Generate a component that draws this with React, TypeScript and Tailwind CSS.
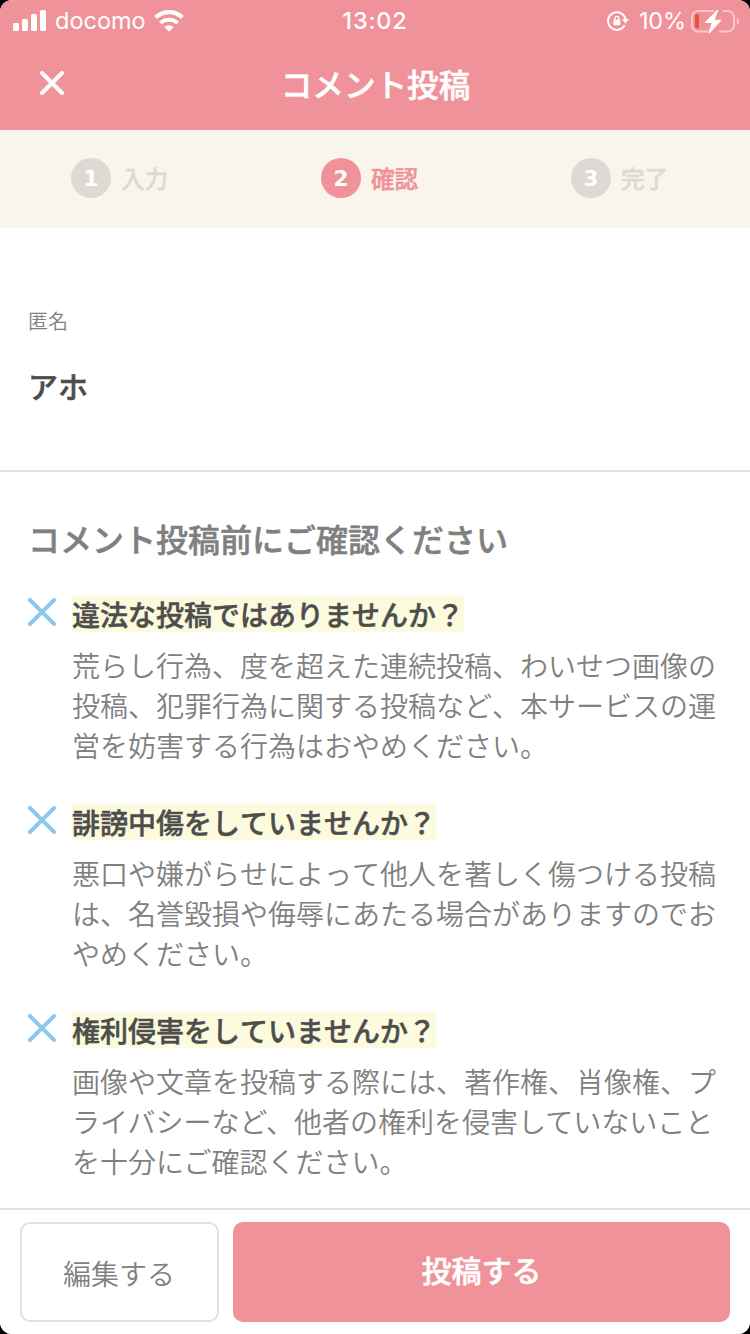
import React from "react";

const jp = "font-['Noto_Sans_CJK_JP',sans-serif] [font-kerning:none]";
const heavy = "font-medium [-webkit-text-stroke:0.5px_currentColor]";

const checks = [
  {
    title: "違法な投稿ではありませんか？",
    kerned: false,
    lines: [
      "荒らし行為、度を超えた連続投稿、わいせつ画像の",
      "投稿、犯罪行為に関する投稿など、本サービスの運",
      "営を妨害する行為はおやめください。",
    ],
  },
  {
    title: "誹謗中傷をしていませんか？",
    kerned: false,
    lines: [
      "悪口や嫌がらせによって他人を著しく傷つける投稿",
      "は、名誉毀損や侮辱にあたる場合がありますのでお",
      "やめください。",
    ],
  },
  {
    title: "権利侵害をしていませんか？",
    kerned: true,
    lines: [
      "画像や文章を投稿する際には、著作権、肖像権、プ",
      "ライバシーなど、他者の権利を侵害していないこと",
      "を十分にご確認ください。",
    ],
  },
];

const steps = [
  { n: "1", label: "入力", active: false },
  { n: "2", label: "確認", active: true },
  { n: "3", label: "完了", active: false },
];

function StatusBar() {
  return (
    <div className="grid h-10 grid-cols-3 font-[Inter,sans-serif] text-white">
      <div className="flex items-center pl-[13px]">
        <svg width="34" height="22" viewBox="0 0 34 22" fill="currentColor" className="-mt-[1px]">
          <rect x="0" y="13" width="6" height="8" rx="1.5" />
          <rect x="9" y="9" width="6" height="12" rx="1.5" />
          <rect x="18" y="4" width="6" height="17" rx="1.5" />
          <rect x="27" y="0" width="6" height="21" rx="1.5" />
        </svg>
        <span className="ml-[8px] w-[91px] text-[23.5px] leading-10">docomo</span>
        <svg width="30" height="22" viewBox="0 0 30 22" fill="none" stroke="currentColor" className="-mt-[1px] ml-[8px]">
          <path d="M1.6 7.6a19 19 0 0 1 26.8 0" strokeWidth="4.2" />
          <path d="M6.4 13.2a12.2 12.2 0 0 1 17.2 0" strokeWidth="3.8" />
          <path d="M15 21.8l-4.7-4.7a6.8 6.8 0 0 1 9.4 0z" fill="currentColor" stroke="none" />
        </svg>
      </div>
      <div className="text-center text-[23.5px] leading-[42px] font-medium tracking-[0.8px]">13:02</div>
      <div className="flex items-center justify-end pr-[10px]">
        <svg width="22" height="22" viewBox="0 0 22 22" fill="none" stroke="currentColor" className="-mt-[1px]">
          <path d="M17.6 15.3A8.8 8.8 0 1 1 18.6 10" strokeWidth="2" />
          <path d="M15 9h7l-3.5 4.6z" fill="currentColor" stroke="none" />
          <rect x="6.5" y="9.6" width="6.8" height="5.6" rx="0.8" fill="currentColor" stroke="none" />
          <path d="M8 10.2V8.2a1.9 1.9 0 0 1 3.8 0v2" strokeWidth="1.3" />
        </svg>
        <span className="ml-[10px] w-[47px] text-[23.5px] leading-10 tracking-[-0.2px]">10%</span>
        <svg width="50" height="26" viewBox="0 0 50 26" fill="none" className="-mt-[1px] ml-[4px] shrink-0">
          <path
            d="M24 3H8a6 6 0 0 0-6 6v8.4a6 6 0 0 0 6 6h10M29 23.4h9a6 6 0 0 0 6-6V9a6 6 0 0 0-6-6h-5"
            stroke="#f8c8cc"
            strokeWidth="2"
          />
          <path d="M46.8 9.6v7.4a4 4 0 0 0 0-7.4z" fill="#f8c8cc" />
          <rect x="5" y="6" width="4" height="14.5" rx="1.8" fill="#e8503f" />
          <path
            d="M27.6 2.2L15.6 14.4h6.8l-3.2 10.4L30.6 12.4h-6.8z"
            fill="#fff"
            stroke="#fff"
            strokeWidth="1.2"
            strokeLinejoin="round"
          />
        </svg>
      </div>
    </div>
  );
}

function Cross({ className, size, stroke }: { className: string; size: number; stroke: number }) {
  const a = stroke / 2;
  const b = size - a;
  return (
    <svg width={size} height={size} className={className} fill="none" stroke="currentColor" strokeWidth={stroke} strokeLinecap="round">
      <path d={`M${a} ${a}L${b} ${b}M${b} ${a}L${a} ${b}`} />
    </svg>
  );
}

export default function App() {
  return (
    <div className="bg-black">
      <div className={`flex h-[1334px] w-[750px] flex-col overflow-hidden rounded-[12px] bg-white text-[#808080] ${jp}`}>
        <header className="h-[130px] shrink-0 bg-[#f0929a] text-white">
          <StatusBar />
          <div className="grid h-[90px] grid-cols-[150px_1fr_150px]">
            <button className="flex items-start pt-[31px] pl-[40px]" aria-label="閉じる">
              <Cross className="text-white" size={24} stroke={4} />
            </button>
            <h1 className={`pl-[1px] text-center text-[31.6px] leading-[86px] ${heavy}`}>コメント投稿</h1>
          </div>
        </header>

        <nav className="grid h-[98px] shrink-0 grid-cols-3 bg-[#faf5ec] pt-7">
          {steps.map((s) => (
            <div key={s.n} className={`flex h-10 items-center gap-[10px] pl-[71px] ${s.active ? "text-[#f0929a]" : "text-[#dddad4]"}`}>
              <span
                className={`flex size-10 items-center justify-center rounded-full pt-[2px] font-['DejaVu_Sans',sans-serif] text-[21.5px] font-bold text-white ${
                  s.active ? "bg-[#f0929a]" : "bg-[#dddad4]"
                }`}
              >
                {s.n}
              </span>
              <span className={`text-[23.6px] leading-10 ${heavy}`}>{s.label}</span>
            </div>
          ))}
        </nav>

        <section className="h-[244px] shrink-0 border-b-2 border-[#e0e0e0] pt-[78px] pl-7">
          <p className="text-[20px] leading-[30px] font-[350]">匿名</p>
          <p className={`mt-[27px] text-[30px] leading-[44px] text-[#4d4d4d] ${heavy}`}>アホ</p>
        </section>

        <main className="h-[736px] shrink-0 pt-[42px] pl-7">
          <h2 className={`text-[32px] leading-[48px] ${heavy}`}>コメント投稿前にご確認ください</h2>
          <ul className="mt-[34px]">
            {checks.map((c) => (
              <li key={c.title} className="flex h-[208px] gap-4">
                <Cross className="mt-[2px] shrink-0 text-[#8fc7ee]" size={28} stroke={4} />
                <div>
                  <h3 className={`h-9 w-fit bg-[#fdfbde] text-[28px] leading-[36px] text-[#4d4d4d] ${heavy}`}>{c.title}</h3>
                  <p className={`mt-[13px] text-[28px] leading-10 font-[350] whitespace-nowrap ${c.kerned ? "[font-kerning:normal]" : ""}`}>
                    {c.lines.map((l) => (
                      <span key={l} className="block">
                        {l}
                      </span>
                    ))}
                  </p>
                </div>
              </li>
            ))}
          </ul>
        </main>

        <footer className="flex h-[126px] shrink-0 gap-[14px] border-t-2 border-[#e0e0e0] bg-white px-5 pt-3">
          <button className="h-[100px] w-[199px] rounded-[10px] border-2 border-[#e0e0e0] pt-[2px] pr-[1px] text-[28px] font-[350]">編集する</button>
          <button className={`h-[100px] flex-1 rounded-[10px] bg-[#f0929a] pb-[5px] text-[30px] text-white ${heavy}`}>投稿する</button>
        </footer>
      </div>
    </div>
  );
}
